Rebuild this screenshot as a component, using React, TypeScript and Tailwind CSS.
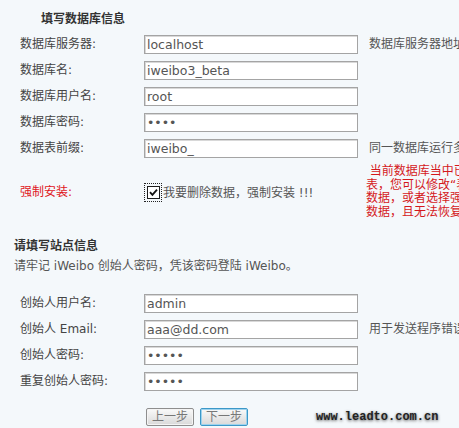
import { type ReactNode } from 'react';

const CJK = "font-['DejaVu_Sans','Noto_Sans_CJK_SC',sans-serif]";

interface FieldRowProps {
  label: ReactNode;
  value: string;
  password?: boolean;
  hint?: string;
}

// One label / input / hint line of the install form
function FieldRow({ label, value, password, hint }: FieldRowProps) {
  return (
    <div className="flex h-[26px] items-center whitespace-nowrap">
      <div className="w-[144px] shrink-0 pl-[20px] text-[12px] text-[#444]">{label}</div>
      <input
        readOnly
        type={password ? 'password' : 'text'}
        value={value}
        className="h-[19px] w-[214px] shrink-0 border border-[#a4a4a4] bg-white px-[2px] text-[12.5px] text-[#555] shadow-[inset_1px_1px_0_#d8d8d8] outline-none"
      />
      {hint && <div className="ml-[11px] shrink-0 text-[12px] text-[#555]">{hint}</div>}
    </div>
  );
}

function Checkbox() {
  return (
    <span className="flex h-[19px] w-[18px] shrink-0 items-center justify-center border border-dotted border-[#222]">
      <span className="flex h-[13px] w-[13px] items-center justify-center border border-[#1c1c1c] bg-white">
        <svg width="9" height="9" viewBox="0 0 9 9">
          <path d="M1 4.2 L3.4 6.8 L8 1.6" fill="none" stroke="#111" strokeWidth="1.8" />
        </svg>
      </span>
    </span>
  );
}

function PushButton({ children, focused }: { children: ReactNode; focused?: boolean }) {
  return (
    <button
      className={
        'h-[18px] w-[48px] rounded-[2px] border bg-gradient-to-b from-[#fafafa] to-[#d9d9d9] text-[12px] leading-none text-[#777] ' +
        (focused
          ? 'border-[#3c98c8] shadow-[inset_0_0_0_1px_#9ed3ee]'
          : 'border-[#8e8e8e] shadow-[inset_0_0_0_1px_#f4f4f4]')
      }
    >
      {children}
    </button>
  );
}

export default function App() {
  return (
    <div className={`h-[428px] w-[459px] overflow-hidden bg-[#f4f8fb] ${CJK}`}>
      {/* database section */}
      <div className="h-[31px] pl-[41px] pt-[10px] text-[12px] font-bold leading-[18px] text-[#333]">
        填写数据库信息
      </div>
      <FieldRow label="数据库服务器:" value="localhost" hint="数据库服务器地址" />
      <FieldRow label="数据库名:" value="iweibo3_beta" />
      <FieldRow label="数据库用户名:" value="root" />
      <FieldRow label="数据库密码:" value="1234" password />
      <FieldRow label="数据表前缀:" value="iweibo_" hint="同一数据库运行多" />

      {/* force install */}
      <div className="flex h-[60px] items-start whitespace-nowrap">
        <div className="w-[144px] shrink-0 pl-[20px] pt-[22px] text-[12px] leading-[19px] text-[#e0161b]">
          强制安装:
        </div>
        <div className="flex w-[222px] shrink-0 items-center pt-[22px] text-[12px] text-[#555]">
          <Checkbox />
          <span className="ml-[1px]">我要删除数据，强制安装 !!!</span>
        </div>
        <div className="shrink-0 pt-[4px] text-[12px] leading-[13.5px] text-[#d4181c]">
          <div>&nbsp;当前数据库当中已</div>
          <div>表，您可以修改“表</div>
          <div>数据，或者选择强制</div>
          <div>数据，且无法恢复</div>
        </div>
      </div>

      {/* site section */}
      <div className="mt-[16px] pl-[14px] text-[12px] font-bold leading-[18px] text-[#333]">请填写站点信息</div>
      <div className="mt-[2px] pl-[14px] text-[12px] leading-[18px] text-[#555]">
        请牢记 iWeibo 创始人密码，凭该密码登陆 iWeibo。
      </div>
      <div className="mt-[15px]">
        <FieldRow label="创始人用户名:" value="admin" />
        <FieldRow label="创始人 Email:" value="aaa@dd.com" hint="用于发送程序错误" />
        <FieldRow label="创始人密码:" value="12345" password />
        <FieldRow label="重复创始人密码:" value="12345" password />
      </div>

      <div className="mt-[14px] flex items-center">
        <div className="flex shrink-0 gap-[6px] pl-[146px]">
          <PushButton>上一步</PushButton>
          <PushButton focused>下一步</PushButton>
        </div>
        <div className="ml-[68px] shrink-0 font-['Liberation_Mono',monospace] text-[12px] font-bold text-[#222] [text-shadow:0_1px_3px_#555]">
          www.leadto.com.cn
        </div>
      </div>
    </div>
  );
}
